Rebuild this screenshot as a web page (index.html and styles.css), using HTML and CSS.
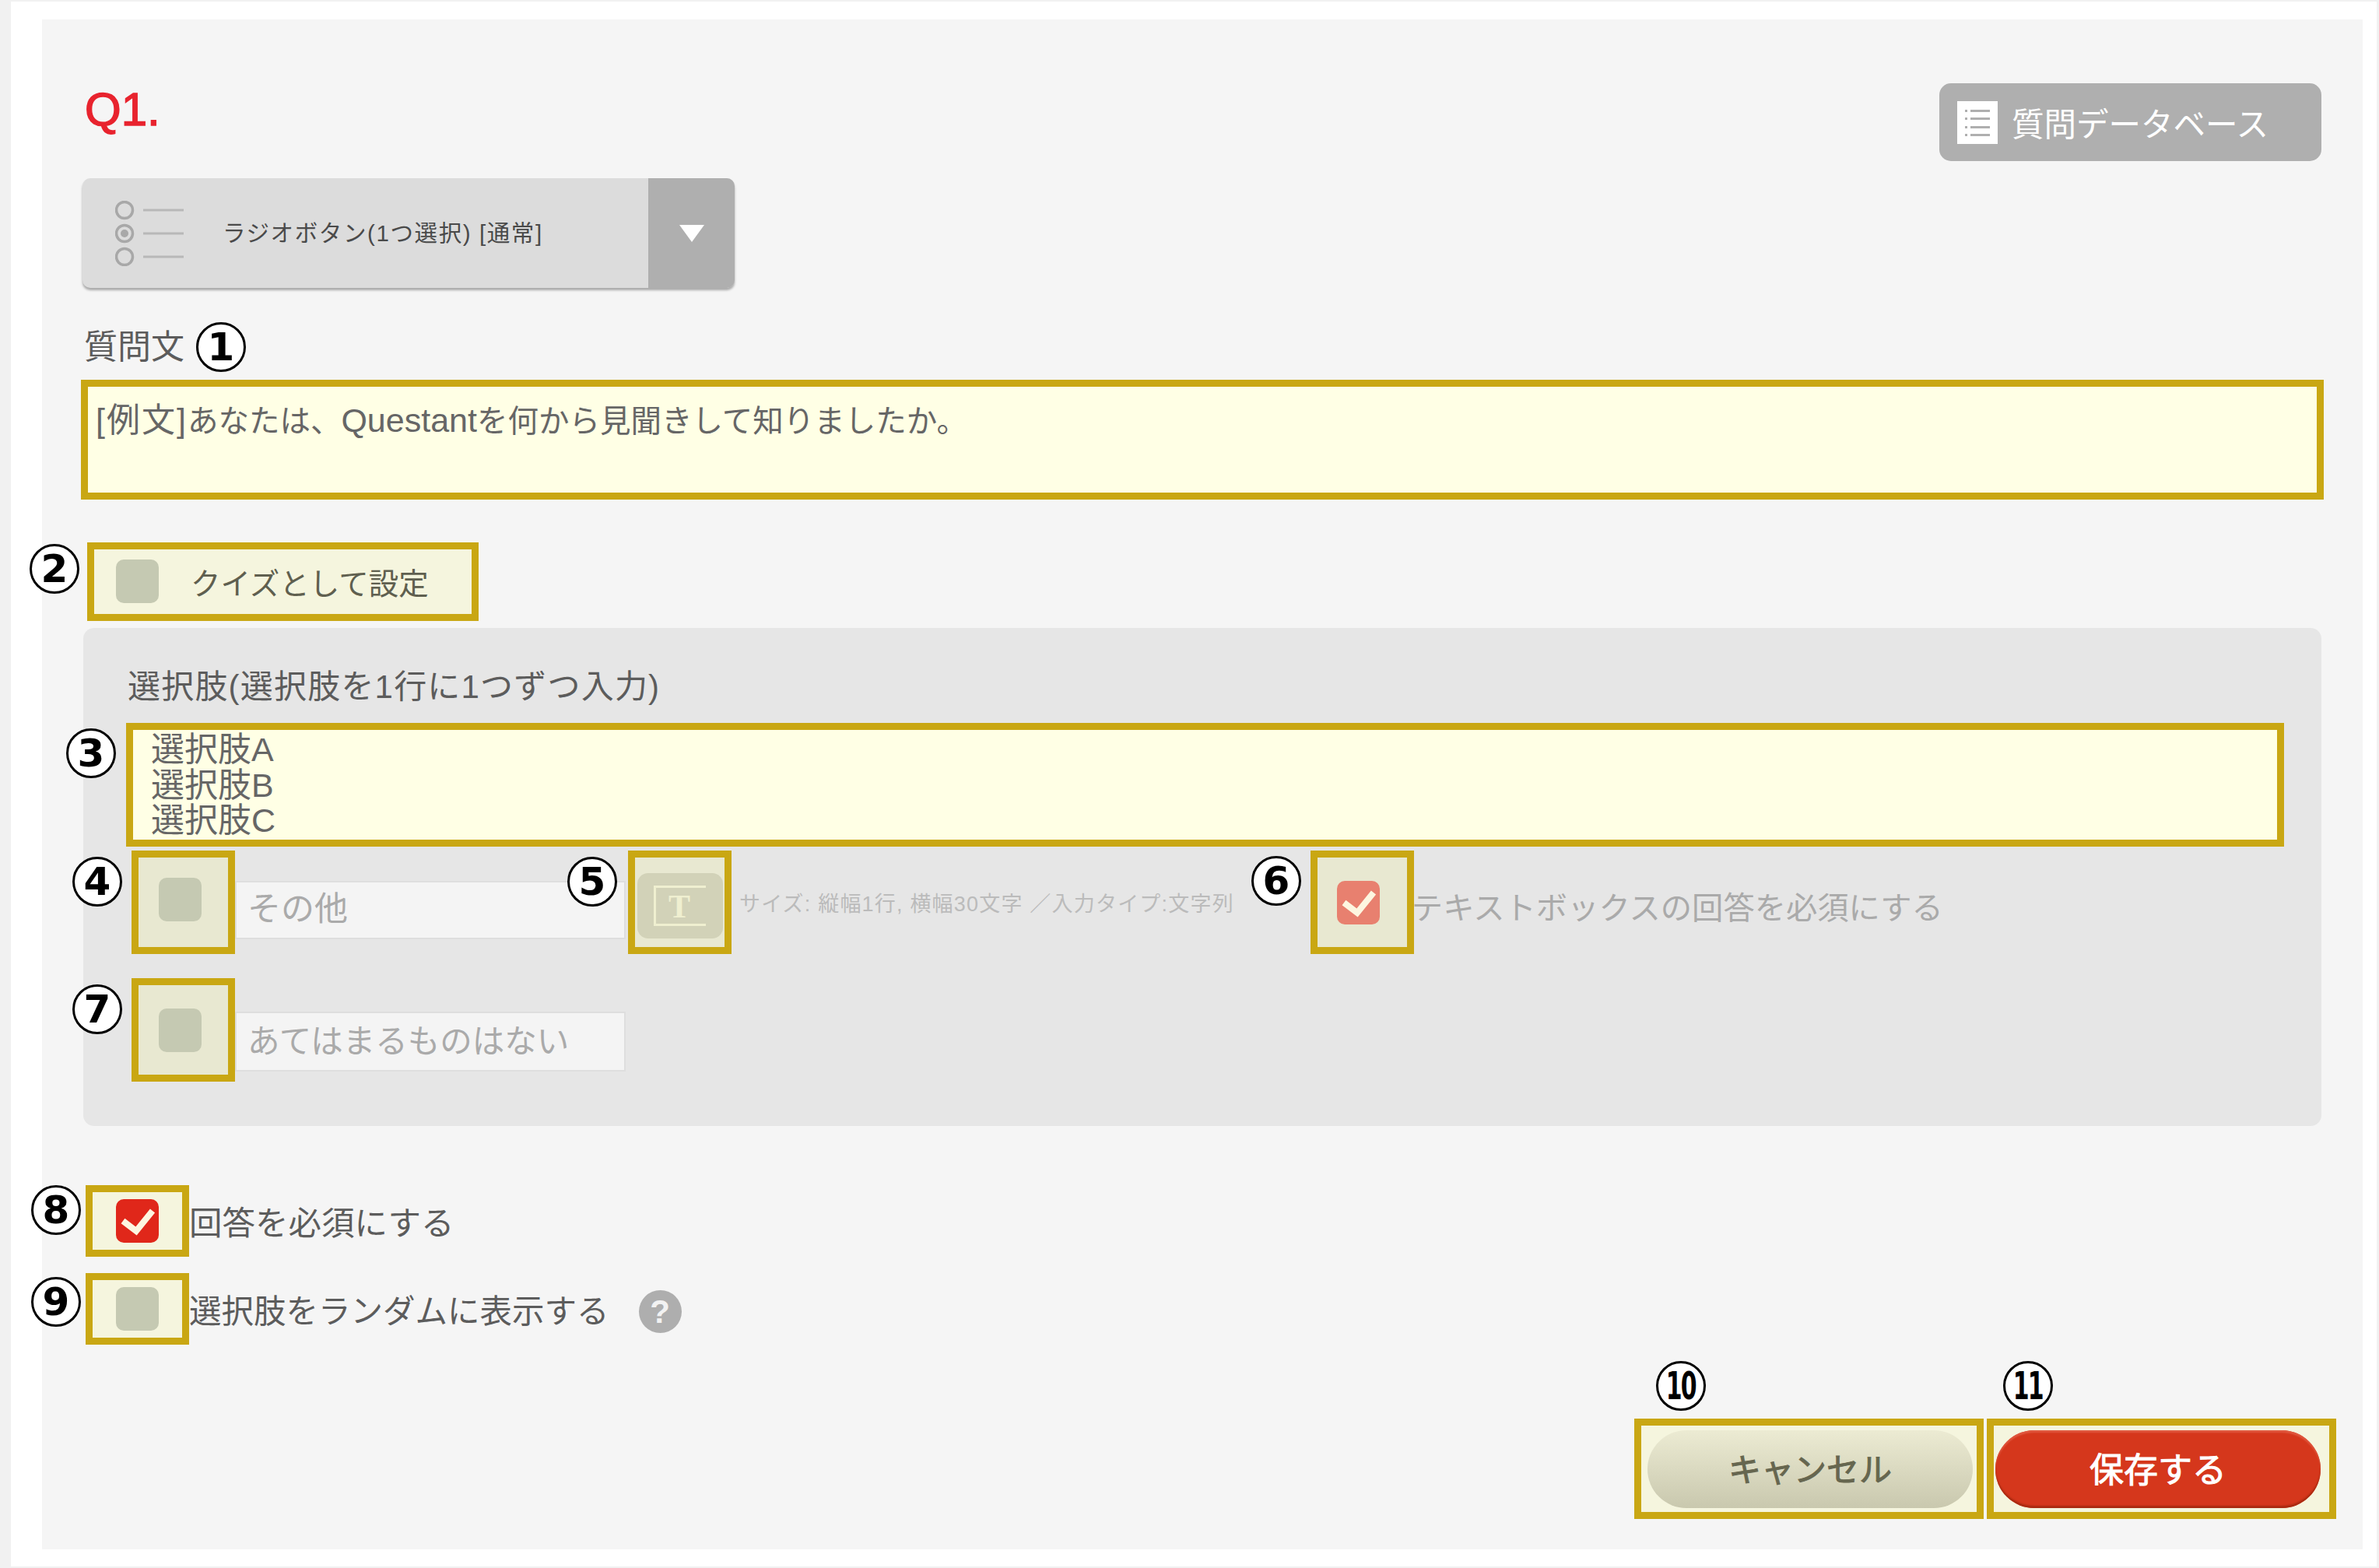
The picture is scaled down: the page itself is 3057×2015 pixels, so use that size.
FILE: index.html
```html
<!DOCTYPE html>
<html lang="ja">
<head>
<meta charset="utf-8">
<title>質問の編集</title>
<link rel="stylesheet" href="styles.css">
</head>
<body>
<div class="frame">
<main class="panel">
  <header class="head">
    <h1 class="qno">Q1.</h1>
    <button class="dbbtn">
      <svg class="dbicon" viewBox="0 0 52 55"><rect width="52" height="55" fill="#fff"/><g fill="#afafaf"><rect x="10" y="11" width="3" height="3"/><rect x="17" y="11" width="25" height="3"/><rect x="10" y="21" width="3" height="3"/><rect x="17" y="21" width="25" height="3"/><rect x="10" y="32" width="3" height="3"/><rect x="17" y="32" width="25" height="3"/><rect x="10" y="42" width="3" height="3"/><rect x="17" y="42" width="25" height="3"/></g></svg>
      <span>質問データベース</span>
    </button>
  </header>

  <div class="select">
    <svg class="radioicon" viewBox="0 0 88 84"><g fill="none" stroke="#a8a8a8" stroke-width="3.500"><circle cx="12" cy="12" r="10.500"/><circle cx="12" cy="42" r="10.500"/><circle cx="12" cy="72" r="10.500"/></g><circle cx="12" cy="42" r="5" fill="#a8a8a8"/><g stroke="#b8b8b8" stroke-width="3"><line x1="36" y1="12" x2="88" y2="12"/><line x1="36" y1="42" x2="88" y2="42"/><line x1="36" y1="72" x2="88" y2="72"/></g></svg>
    <span class="selecttext">ラジオボタン(1つ選択) [通常]</span>
    <span class="selectarrow"><i class="tri"></i></span>
  </div>

  <div class="qlabel"><span class="txt">質問文</span><span class="badge badge-inline">1</span></div>
  <div class="mark field qfield"><span class="lat wider">[例文]</span>あなたは、<span class="lat">Questant</span>を何から見聞きして知りましたか。</div>

  <div class="mark quiz">
    <span class="badge b2">2</span>
    <i class="check"></i><span class="txt quiztext">クイズとして設定</span>
  </div>

  <section class="options">
    <div class="txt optlabel">選択肢(選択肢を1行に1つずつ入力)</div>
    <div class="mark field optfield">
      <span class="badge b3">3</span>
      選択肢A<br>選択肢B<br>選択肢C
    </div>
    <div class="optrow first">
      <div class="mark square"><span class="badge b4">4</span><i class="check"></i></div>
      <div class="input in1">その他</div>
      <div class="mark square tbox"><span class="badge b5">5</span>
        <span class="tbtn"><svg viewBox="0 0 67 52" class="ticon"><path d="M67 1.500H1.500V50.500H67" fill="none" stroke="#efefd0" stroke-width="3"/><text x="33" y="41" text-anchor="middle" class="tglyph">T</text></svg></span>
      </div>
      <div class="helper">サイズ: 縦幅1行, 横幅30文字 ／入力タイプ:文字列</div>
      <div class="mark square sixth"><span class="badge b6">6</span><i class="check soft"><svg viewBox="0 0 55 56" class="tick"><path d="M9 28L26 41L47 15" fill="none" stroke="#fdf6e0" stroke-width="8"/></svg></i></div>
      <div class="txt dimtext">テキストボックスの回答を必須にする</div>
    </div>
    <div class="optrow second">
      <div class="mark square"><span class="badge b7">7</span><i class="check"></i></div>
      <div class="input in2">あてはまるものはない</div>
    </div>
  </section>

  <div class="chkrow r8">
    <div class="mark wide"><span class="badge b8">8</span><i class="check on"><svg viewBox="0 0 55 56" class="tick"><path d="M9 28L26 41L47 15" fill="none" stroke="#fdf6e0" stroke-width="8"/></svg></i></div>
    <span class="txt rowtext">回答を必須にする</span>
  </div>
  <div class="chkrow r9">
    <div class="mark wide"><span class="badge b9">9</span><i class="check"></i></div>
    <span class="txt rowtext">選択肢をランダムに表示する</span>
    <span class="help">?</span>
  </div>

  <div class="actions">
    <div class="mark act act1"><span class="badge b10"><span class="narrow">10</span></span><button class="btn cancel">キャンセル</button></div>
    <div class="mark act act2"><span class="badge b11"><span class="narrow">11</span></span><button class="btn save">保存する</button></div>
  </div>
</main>
</div>
</body>
</html>
```

FILE: styles.css
```css
* { box-sizing: border-box; }
html, body { margin: 0; padding: 0; }
body {
  width: 3057px;
  height: 2015px;
  background: #f1f1f1;
  padding: 2px 3px 2px 14px;
  font-family: "Liberation Sans", "Noto Sans CJK JP", sans-serif;
  overflow: hidden;
}
.frame {
  background: #fff;
  height: 2011px;
  padding: 23px 18px 22px 40px;
}
.panel {
  background: #f5f5f5;
  height: 1966px;
  padding: 82px 53px 0 52px;
}
.head {
  display: flex;
  justify-content: space-between;
  align-items: flex-start;
  height: 100px;
}
.qno {
  margin: 1px 0 0 3px;
  font-size: 60px;
  line-height: 66px;
  font-weight: 400;
  color: #e8232e;
  -webkit-text-stroke: 1.500px #e8232e;
}
.dbbtn {
  display: flex;
  align-items: center;
  gap: 18px;
  width: 491px;
  height: 100px;
  padding: 0 0 0 23px;
  border: 0;
  border-radius: 15px;
  background: #afafaf;
  color: #fff;
  font: 400 41.500px/52px "Noto Sans CJK JP", sans-serif;
}
.dbicon { width: 52px; height: 55px; }

.select {
  display: flex;
  align-items: center;
  width: 838px;
  height: 141px;
  margin-top: 22px;
  border-radius: 10px;
  background: #dcdcdc;
  box-shadow: 0 3px 3px #a9a9a9;
  overflow: hidden;
}
.radioicon { width: 88px; height: 84px; margin-left: 42px; flex: none; }
.selecttext {
  margin-left: 50px;
  font-size: 29.500px;
  line-height: 40px;
  letter-spacing: 1.600px;
  color: #4a4a4a;
  flex: 1;
  white-space: nowrap;
}
.selectarrow {
  width: 111px;
  height: 141px;
  background: #afafaf;
  display: flex;
  align-items: center;
  justify-content: center;
  flex: none;
}
.tri {
  border-left: 16px solid transparent;
  border-right: 16px solid transparent;
  border-top: 22px solid #fff;
}

.txt {
  font-size: 42px;
  line-height: 52px;
  color: #5c5c5c;
}
.qlabel {
  display: flex;
  align-items: center;
  height: 64px;
  margin-top: 44px;
}
.qlabel .txt { font-size: 43px; margin-left: 2px; }

.mark {
  position: relative;
  border: 9px solid #c9a713;
  background: rgba(255, 255, 0, .09);
}
.field {
  background: #ffffe5;
  color: #666;
  font-size: 43px;
}
.qfield {
  height: 154px;
  margin: 10px -3px 0 -2px;
  padding: 17px 0 0 10px;
  font-size: 39.500px;
  line-height: 52px;
}
.lat { font-size: 43px; }
.wider { letter-spacing: 2px; }

.badge {
  position: absolute;
  display: flex;
  align-items: center;
  justify-content: center;
  width: 64px;
  height: 64px;
  border: 3px solid #000;
  border-radius: 50%;
  background: #fff;
  color: #000;
  font: 700 50px/1 "DejaVu Sans", sans-serif;
}
.badge-inline { position: static; margin-left: 15px; }
.narrow { display: block; transform: scaleX(.6); letter-spacing: -3px; }
.b2 { left: -83px; top: -7px; }
.b3 { left: -86px; top: -2px; }
.b4 { left: -85px; top: -1px; }
.b5 { left: -87px; top: -1px; }
.b6 { left: -85px; top: -2px; }
.b7 { left: -85px; top: -1px; }
.b8 { left: -79px; top: -9px; }
.b9 { left: -79px; top: -4px; }
.b10, .b11 { top: -83px; }
.b10 { left: 19px; }
.b11 { left: 12px; }

.check {
  display: block;
  flex: none;
  width: 55px;
  height: 56px;
  border-radius: 10px;
  background: #c5c9b2;
}
.check.on { background: #e0271a; }
.check.soft { background: #e8806f; }
.tick { display: block; width: 55px; height: 56px; }

.quiz {
  display: flex;
  align-items: center;
  width: 503px;
  height: 101px;
  margin: 55px 0 0 6px;
  padding-left: 28px;
}
.quiz .check { margin-top: -2px; }
.quiztext { margin: 6px 0 0 41px; font-size: 38.500px; color: #5f5f4f; white-space: nowrap; }

.options {
  height: 640px;
  margin: 9px 0 0 1px;
  padding: 50px 48px 0 55px;
  border-radius: 14px;
  background: #e6e6e6;
}
.optlabel { margin-left: 2px; letter-spacing: 1.200px; white-space: nowrap; }
.optfield {
  height: 159px;
  margin-top: 20px;
  padding: 3px 0 0 23px;
  line-height: 45.500px;
}
.optrow { display: flex; align-items: center; margin-left: 7px; }
.optrow.first { margin-top: 5px; }
.optrow.second { margin-top: 31px; }

.square {
  display: flex;
  align-items: center;
  width: 133px;
  height: 133px;
  padding: 0 0 8px 26px;
  flex: none;
}
.second .square { padding-bottom: 0; }
.input {
  height: 75px;
  margin-top: 20px;
  width: 502px;
  padding-left: 14px;
  border: 2px solid #dedede;
  background: #f4f4f4;
  color: #aaa;
  font-size: 43px;
  line-height: 68px;
}
.in2 { height: 77px; margin-top: 30px; font-size: 41.500px; line-height: 74px; }
.tbox { margin-left: 3px; padding: 9px 0 0; justify-content: center; }
.tbtn {
  display: flex;
  align-items: center;
  justify-content: center;
  width: 110px;
  height: 84px;
  border-radius: 14px;
  background: #d2d2b8;
}
.ticon { width: 67px; height: 52px; }
.tglyph { font: 700 42px "Liberation Serif", serif; fill: #efefd0; }
.helper {
  flex: 0 0 635px;
  margin: 5px 0 0 10px;
  color: #bbb;
  font-size: 27px;
  letter-spacing: 1.200px;
  line-height: 34px;
  white-space: nowrap;
}
.sixth { margin-left: 98px; padding: 0 0 0 25px; }
.dimtext { margin: 17px 0 0 -3px; color: #aaa; font-size: 40.300px; white-space: nowrap; }

.chkrow { display: flex; align-items: center; margin-left: 4px; }
.r8 { margin-top: 76px; }
.r9 { margin-top: 21px; }
.wide {
  display: flex;
  align-items: center;
  justify-content: center;
  width: 133px;
  height: 92px;
  flex: none;
}
.rowtext { margin: 8px 0 0 0; white-space: nowrap; }
.r8 .rowtext { font-size: 42.500px; }
.r9 .rowtext { font-size: 41.500px; }
.help {
  width: 55px;
  height: 55px;
  margin: 6px 0 0 38px;
  border-radius: 50%;
  background: #aeaeae;
  color: #f2f2f2;
  font: 700 42px/55px "Liberation Sans", sans-serif;
  text-align: center;
}

.actions {
  display: flex;
  justify-content: flex-end;
  gap: 4px;
  margin: 95px -19px 0 0;
}
.act {
  display: flex;
  align-items: center;
  width: 449px;
  height: 129px;
}
.act1 { padding-left: 8px; }
.act2 { padding-left: 2px; }
.btn {
  width: 418px;
  height: 100px;
  padding: 0 0 4px;
  border: 0;
  border-radius: 50px;
  font: 400 42px/1 "Noto Sans CJK JP", sans-serif;
  -webkit-text-stroke: 1px currentColor;
}
.cancel {
  background: linear-gradient(#ecebd3, #c9c8ae);
  color: #66664f;
}
.save {
  background: #d5371c;
  color: #fff;
  font-size: 44px;
  box-shadow: inset 0 -3px 2px #a92a10, inset 0 3px 2px #e0583f;
}
```
